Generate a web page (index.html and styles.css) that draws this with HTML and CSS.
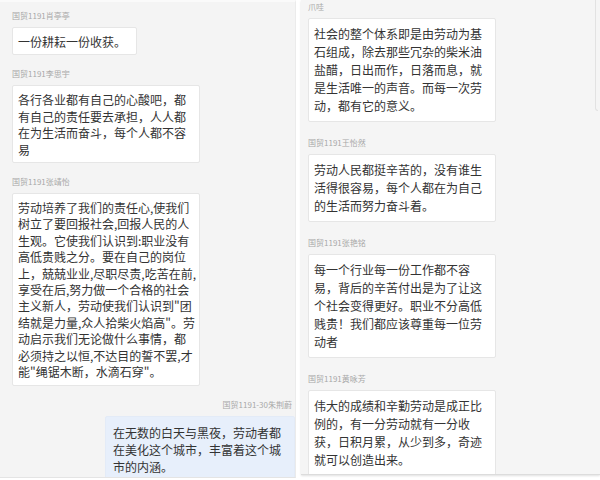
FILE: index.html
```html
<!DOCTYPE html>
<html lang="zh">
<head>
<meta charset="utf-8">
<link rel="stylesheet" href="styles.css">
</head>
<body>
<div class="page">
  <div class="panel left">
    <div class="msg">
      <div class="name">国贸1191肖亭亭</div>
      <div class="bubble">一份耕耘一份收获。</div>
    </div>
    <div class="msg">
      <div class="name">国贸1191李思宇</div>
      <div class="bubble">各行各业都有自己的心酸吧，都<br>有自己的责任要去承担，人人都<br>在为生活而奋斗，每个人都不容<br>易</div>
    </div>
    <div class="msg">
      <div class="name">国贸1191张靖怡</div>
      <div class="bubble">劳动培养了我们的责任心,使我们<br>树立了要回报社会,回报人民的人<br>生观。它使我们认识到:职业没有<br>高低贵贱之分。要在自己的岗位<br>上，兢兢业业,尽职尽责,吃苦在前,<br>享受在后,努力做一个合格的社会<br>主义新人，劳动使我们认识到"团<br>结就是力量,众人拾柴火焰高"。劳<br>动启示我们无论做什么事情，都<br>必须持之以恒,不达目的誓不罢,才<br>能"绳锯木断，水滴石穿"。</div>
    </div>
    <div class="msg mine">
      <div class="name">国贸1191-30朱荆蔚</div>
      <div class="bubble blue">在无数的白天与黑夜，劳动者都<br>在美化这个城市，丰富着这个城<br>市的内涵。</div>
    </div>
  </div>
  <div class="panel right">
    <div class="scroll-edge"></div>
    <div class="msg">
      <div class="name">爪哇</div>
      <div class="bubble">社会的整个体系即是由劳动为基<br>石组成，除去那些冗杂的柴米油<br>盐醋，日出而作，日落而息，就<br>是生活唯一的声音。而每一次劳<br>动，都有它的意义。</div>
    </div>
    <div class="msg">
      <div class="name">国贸1191王怡然</div>
      <div class="bubble">劳动人民都挺辛苦的，没有谁生<br>活得很容易，每个人都在为自己<br>的生活而努力奋斗着。</div>
    </div>
    <div class="msg">
      <div class="name">国贸1191张艳铭</div>
      <div class="bubble">每一个行业每一份工作都不容<br>易，背后的辛苦付出是为了让这<br>个社会变得更好。职业不分高低<br>贱贵！我们都应该尊重每一位劳<br>动者</div>
    </div>
    <div class="msg">
      <div class="name">国贸1191黄咏芳</div>
      <div class="bubble">伟大的成绩和辛勤劳动是成正比<br>例的，有一分劳动就有一分收<br>获，日积月累，从少到多，奇迹<br>就可以创造出来。</div>
    </div>
  </div>
</div>
</body>
</html>
```
FILE: styles.css
```css
html, body {
  margin: 0;
  padding: 0;
  background: #ffffff;
}
body {
  width: 600px;
  height: 480px;
  overflow: hidden;
  font-family: "Noto Sans CJK SC", "Noto Sans", sans-serif;
  color: #333333;
}
.page {
  display: flex;
  gap: 5px;
  width: 600px;
  height: 480px;
}
.panel {
  position: relative;
  display: flex;
  flex-direction: column;
  overflow: hidden;
  background: #f4f4f4;
  box-sizing: border-box;
}
.left {
  width: 296px;
  height: 478px;
  padding: 9px 0 0 12px;
  border-top: 2px solid #fafafa;
  border-right: 1px solid #ebebeb;
  border-bottom: 1px solid #e4e4e4;
}
.right {
  width: 299px;
  height: 475px;
  padding: 2px 0 0 7px;
  background: #f5f5f5;
  border-bottom: 1px solid #dcdcdc;
  box-shadow: 0 1px 2px rgba(0,0,0,0.12);
}
.msg {
  display: flex;
  flex-direction: column;
  align-items: flex-start;
  margin-bottom: 14px;
}
.right .msg {
  margin-bottom: 16px;
}
.name {
  font-size: 8px;
  line-height: 10px;
  color: #a8a8a8;
  margin-bottom: 6px;
  white-space: nowrap;
}
.bubble {
  background: #ffffff;
  border: 1px solid #e6e6e6;
  border-radius: 2px;
  font-size: 12px;
  line-height: 16.4px;
  padding: 6px 6px 4px 5px;
  white-space: nowrap;
  min-width: 0;
}
.left .bubble {
  width: 175px;
  box-sizing: content-box;
}
.left .msg:first-child .bubble {
  width: auto;
  padding: 6px 10px 4px 5px;
}
.right .bubble {
  width: 175px;
  line-height: 18px;
  padding: 6px 6px 6px 5px;
}
.mine {
  align-items: flex-end;
  margin-bottom: 0;
}
.mine .name {
  margin-right: 3px;
}
.left .mine .bubble.blue {
  background: #e7effb;
  border-color: #e3ebf7;
  line-height: 17px;
  padding: 7px 12px 6px 7px;
  width: 169px;
}
.scroll-edge {
  position: absolute;
  right: 2px;
  top: 0;
  width: 2px;
  height: 110px;
  border-left: 1px solid #e2e2e2;
  border-bottom: 1px solid #e2e2e2;
  border-bottom-left-radius: 3px;
}
```
